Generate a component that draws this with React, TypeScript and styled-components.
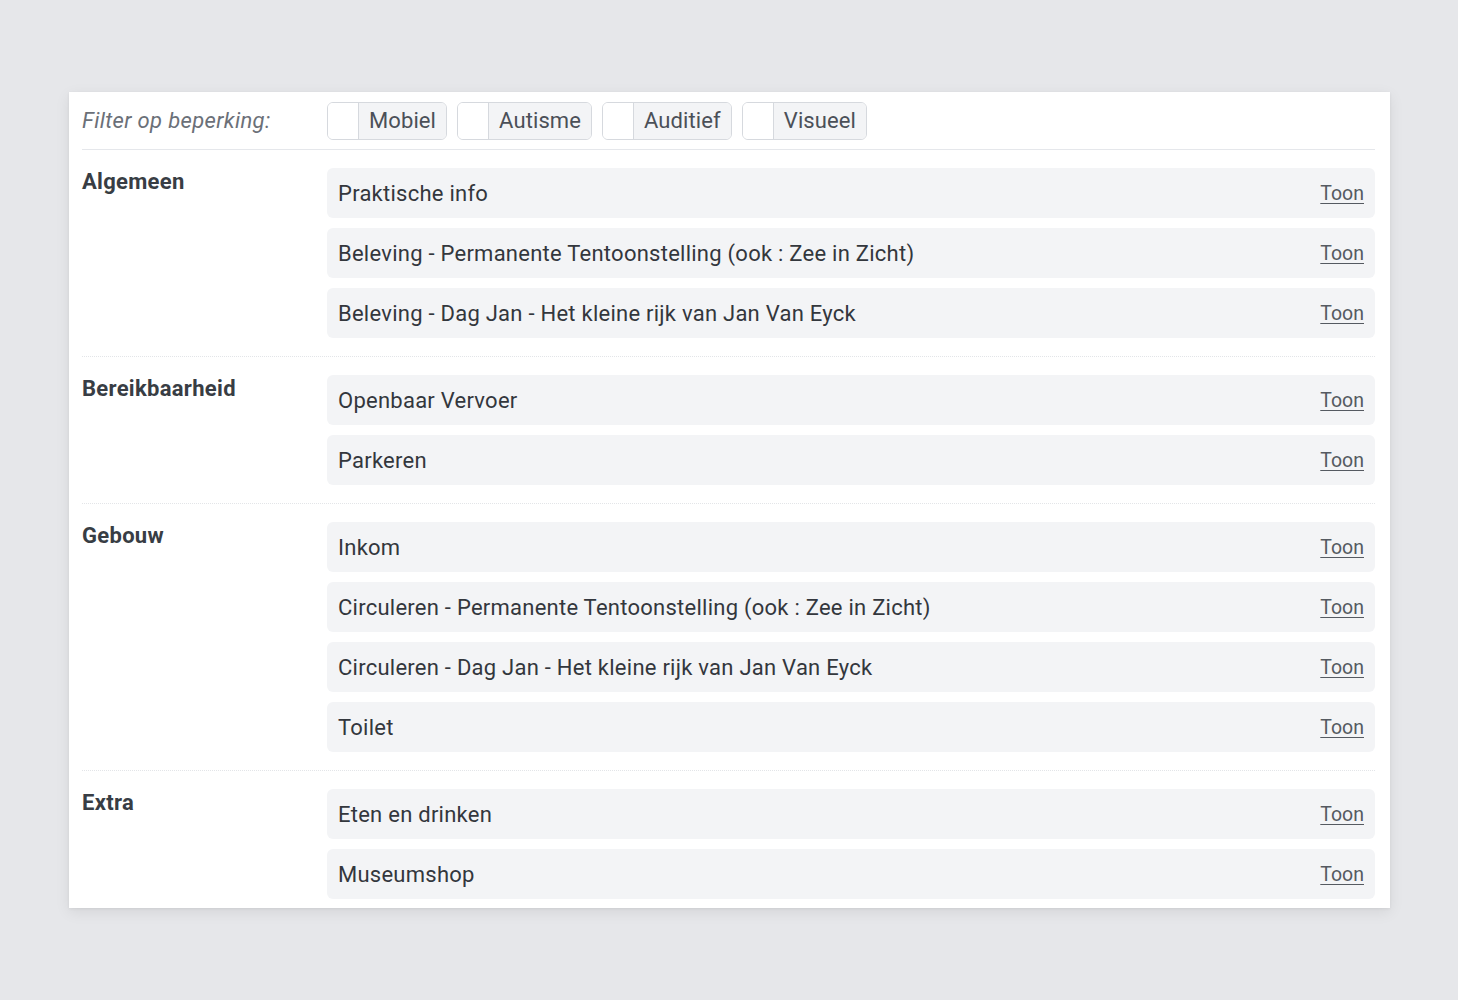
import React from "react";
import styled, { createGlobalStyle } from "styled-components";

const GlobalStyle = createGlobalStyle`
  html, body { margin: 0; padding: 0; background: #e6e7ea; }
  body { font-family: Roboto, "Liberation Sans", Arial, sans-serif; }
  * { box-sizing: border-box; }
`;

const Page = styled.div`
  padding: 92px 68px 92px 69px;
`;

const Card = styled.div`
  width: 1321px;
  background: #ffffff;
  padding: 0 15px 9px 13px;
  box-shadow: 0 4px 14px rgba(0, 0, 0, 0.08), 0 1px 3px rgba(0, 0, 0, 0.06);
`;

const FilterRow = styled.div`
  display: grid;
  grid-template-columns: 245px 1fr;
  align-items: center;
  height: 58px;
  border-bottom: 1px solid #e5e7eb;
`;

const FilterLabel = styled.div`
  font-style: italic;
  font-size: 22px;
  letter-spacing: 0.35px;
  color: #6b7078;
`;

const Toggles = styled.div`
  display: flex;
  gap: 10px;
`;

const Toggle = styled.label`
  display: flex;
  height: 38px;
  border: 1px solid #d6d9de;
  border-radius: 6px;
  overflow: hidden;
`;

const Check = styled.span`
  width: 31px;
  background: #ffffff;
  border-right: 1px solid #d6d9de;
`;

const ToggleText = styled.span`
  display: flex;
  align-items: center;
  padding: 0 10px;
  background: #f3f4f6;
  font-size: 22px;
  letter-spacing: 0.1px;
  color: #4b5058;
`;

const Section = styled.div<{ $last?: boolean }>`
  display: grid;
  grid-template-columns: 245px 1fr;
  padding: 18px 0 ${(p) => (p.$last ? "0" : "18px")};
  border-bottom: ${(p) => (p.$last ? "none" : "1px dotted #e3e5e8")};
`;

const SectionTitle = styled.div`
  font-size: 22px;
  font-weight: 700;
  letter-spacing: 0.3px;
  line-height: 28px;
  color: #383d44;
`;

const Rows = styled.div`
  display: flex;
  flex-direction: column;
  gap: 10px;
`;

const Row = styled.div`
  display: flex;
  align-items: center;
  justify-content: space-between;
  height: 50px;
  padding: 0 11px;
  background: #f3f4f6;
  border-radius: 6px;
`;

const RowText = styled.span`
  font-size: 22px;
  letter-spacing: 0.25px;
  color: #33373d;
`;

const ToonLink = styled.a`
  font-size: 19.5px;
  color: #555a61;
  text-decoration: underline;
  text-underline-offset: 3px;
  cursor: pointer;
`;

const sections: { title: string; items: string[] }[] = [
  {
    title: "Algemeen",
    items: [
      "Praktische info",
      "Beleving - Permanente Tentoonstelling (ook : Zee in Zicht)",
      "Beleving - Dag Jan - Het kleine rijk van Jan Van Eyck",
    ],
  },
  { title: "Bereikbaarheid", items: ["Openbaar Vervoer", "Parkeren"] },
  {
    title: "Gebouw",
    items: [
      "Inkom",
      "Circuleren - Permanente Tentoonstelling (ook : Zee in Zicht)",
      "Circuleren - Dag Jan - Het kleine rijk van Jan Van Eyck",
      "Toilet",
    ],
  },
  { title: "Extra", items: ["Eten en drinken", "Museumshop"] },
];

const filters = ["Mobiel", "Autisme", "Auditief", "Visueel"];

export default function App() {
  return (
    <Page>
      <GlobalStyle />
      <Card>
        <FilterRow>
          <FilterLabel>Filter op beperking:</FilterLabel>
          <Toggles>
            {filters.map((f) => (
              <Toggle key={f}>
                <Check />
                <ToggleText>{f}</ToggleText>
              </Toggle>
            ))}
          </Toggles>
        </FilterRow>
        {sections.map((s, i) => (
          <Section key={s.title} $last={i === sections.length - 1}>
            <SectionTitle>{s.title}</SectionTitle>
            <Rows>
              {s.items.map((it) => (
                <Row key={it}>
                  <RowText>{it}</RowText>
                  <ToonLink>Toon</ToonLink>
                </Row>
              ))}
            </Rows>
          </Section>
        ))}
      </Card>
    </Page>
  );
}
